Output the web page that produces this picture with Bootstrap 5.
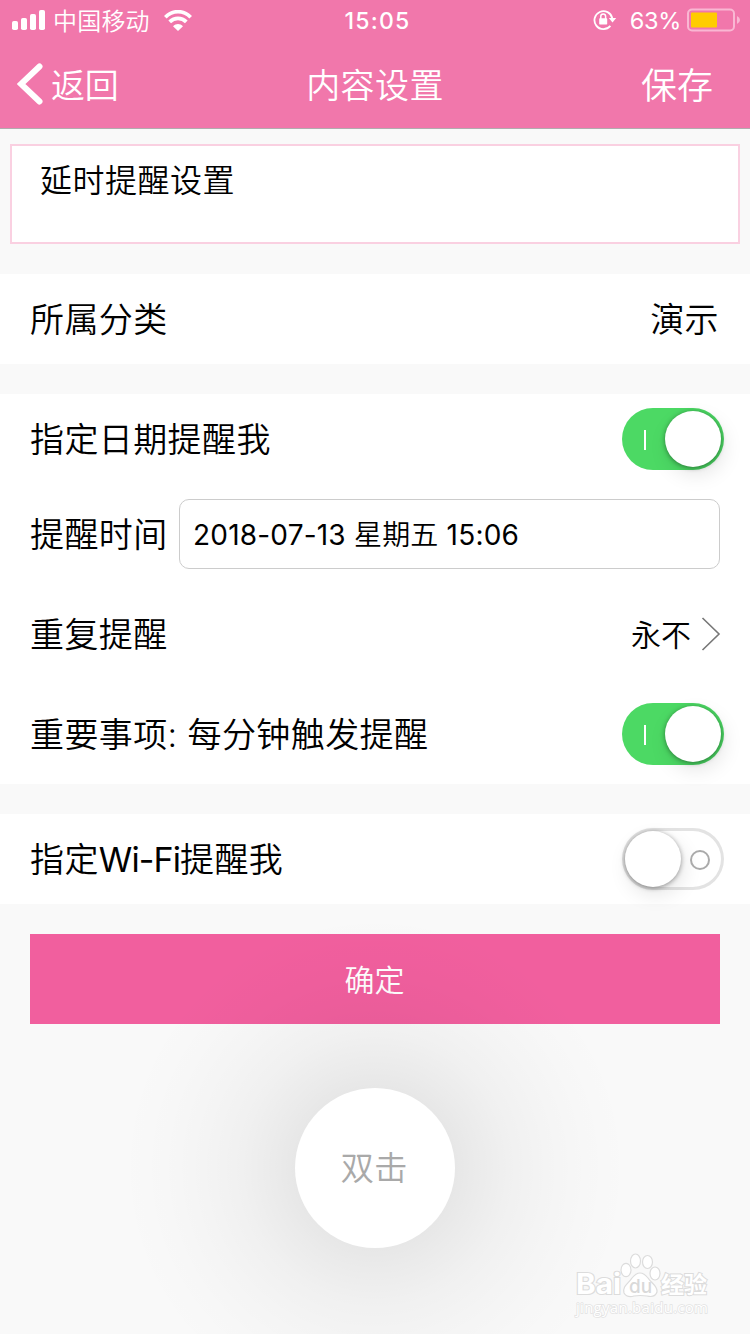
<!DOCTYPE html>
<html lang="zh-CN">
<head>
<meta charset="utf-8">
<meta name="viewport" content="width=device-width, initial-scale=1">
<title>内容设置</title>
<link href="https://cdn.jsdelivr.net/npm/bootstrap@5.3.0/dist/css/bootstrap.min.css" rel="stylesheet">
<style>
  body { width: 750px; height: 1334px; overflow: hidden; background: #f9f9f9; color: #000;
    font-family: Inter, "Noto Sans CJK SC", sans-serif; font-weight: 350; font-size: 34px; line-height: 1; letter-spacing: .4px; }
  main { height: 1205px; overflow: hidden; }
  .top-bar { height: 129px; background: #f177ab; border-bottom: 1px solid #b2abae; }
  .status { height: 40px; }
  .status svg, .titles svg { display: block; flex: none; }
  .carrier { font-size: 24px; letter-spacing: .2px; margin-left: 7px; padding-top: 3px; }
  .wifi { margin-left: 14px; }
  .clock { font-size: 23px; font-weight: 500; letter-spacing: 1.2px; padding: 2px 0 0 1px; }
  .pct { font-size: 23.5px; letter-spacing: -.3px; font-weight: 400; margin-left: 14px; padding-top: 2px; }
  .bat { margin-left: 6px; margin-right: 1px; }
  .lock { margin-right: -1px; }
  .titles { height: 88px; }
  .titles span { padding-top: 3px; }
  .back, .save { width: 260px; }
  .side { flex: 1 1 0; }
  .back { padding-left: 17px; }
  .back-text { margin-left: 8px; letter-spacing: -.2px; }
  .save { font-size: 36px; padding: 3px 37px 0 0; letter-spacing: 0; }
  .memo { height: 100px; margin: 15px 10px 30px; border: 2px solid #fad0e1; padding: 19px 28px; font-size: 32px; letter-spacing: .5px; line-height: 32px; }
  .line { height: 100px; padding: 0 30px; }
  .line-s { height: 90px; }
  .line .lbl { padding-top: 1px; }
  .end { margin-right: 1px; }
  .wf { letter-spacing: -.9px; font-weight: 380; }
  .gap-block { margin-bottom: 30px; }
  .when { height: 70px; width: 541px; border: 1px solid #ccc; border-radius: 10px; font-size: 28px; letter-spacing: .2px; font-weight: 400; padding: 1px 0 0 13px; }
  .when .zh { font-weight: 350; }
  .never { font-size: 30px; letter-spacing: 0; margin-right: -1px; }
  .chev { margin-left: 9px; }
  .sw { width: 102px; height: 62px; border-radius: 31px; margin-right: -4px; padding: 3px; background: #4cd964; }
  .knob { width: 56px; height: 56px; border-radius: 50%; background: #fff; box-shadow: 0 1px 5px rgba(0,0,0,.4), 3px 8px 20px rgba(0,0,0,.1); }
  .sw.on { padding-left: 22px; }
  .bar-on { width: 2px; height: 20px; background: #fff; margin-top: 2px; }
  .sw.off { background: #fff; box-shadow: inset 0 0 0 3px #e3e3e3; padding-right: 14px; }
  .ring { width: 20px; height: 20px; border: 2px solid #aaa; border-radius: 50%; margin-top: 2px; }
  .ok { height: 90px; margin: 0 30px; padding: 1px 1px 0 0; background: #f15f9e; color: #fff; font-size: 30px; letter-spacing: 0; }
  .tap-zone { margin-top: 64px; height: 160px; }
  .tap { width: 160px; height: 160px; border-radius: 50%; background: #fff; color: #a9a9a9; font-size: 33.5px; letter-spacing: .1px; padding: 2px 2px 0 0; }
  .halo { width: 520px; height: 520px; left: 115px; top: -180px; pointer-events: none;
    background: radial-gradient(circle closest-side, rgba(0,0,0,.074) 30%, rgba(0,0,0,.06) 38%, rgba(0,0,0,.037) 52%, rgba(0,0,0,.018) 67%, rgba(0,0,0,.007) 82%, rgba(0,0,0,0) 98%); }
  .mark-baidu { right: 36px; bottom: 12px; }
</style>
</head>
<body>
<header class="top-bar text-white">
  <div class="status d-flex align-items-center px-2">
    <div class="side d-flex align-items-center ps-1">
      <svg width="34" height="20" fill="#fff"><rect x="0" y="11" width="6" height="9" rx="1.8"/><rect x="9" y="8" width="6" height="12" rx="1.8"/><rect x="18" y="4" width="6" height="16" rx="1.8"/><rect x="27" y="0" width="6" height="20" rx="1.8"/></svg>
      <span class="carrier">中国移动</span>
      <svg class="wifi" width="28" height="21" viewBox="0 0 28 21" fill="none" stroke="#fff" stroke-width="3.7"><path d="M1.3 7.2C8.5-.2 19.5-.2 26.7 7.2"/><path d="M5.7 11.9C10.4 7.1 17.6 7.1 22.3 11.9"/><path d="M9 16.3C12 13.2 16 13.2 19 16.3L14 21Z" fill="#fff" stroke="none"/></svg>
    </div>
    <span class="clock">15:05</span>
    <div class="side d-flex align-items-center justify-content-end">
      <svg class="lock" width="24" height="22" viewBox="0 0 24 22"><path d="M17.4 16.9A9 9 0 1 1 19.3 9.4" fill="none" stroke="#fff" stroke-width="1.8"/><path d="M15.8 9H23.2L19.5 13.6Z" fill="#fff"/><rect x="6.2" y="9.2" width="8" height="6.3" rx=".7" fill="#fff"/><path d="M7.8 10V7.3a2.4 2.4 0 0 1 4.8 0V10" fill="none" stroke="#fff" stroke-width="1.5"/></svg>
      <span class="pct">63%</span>
      <svg class="bat" width="54" height="24" viewBox="0 0 54 24"><rect x="1" y="1.5" width="46" height="21" rx="4" fill="none" stroke="#f9b7d3" stroke-width="2"/><rect x="4" y="4.5" width="26" height="15" rx="1" fill="#fc0"/><path d="M50 8Q53 9.5 53 12T50 16Z" fill="#f9b7d3"/></svg>
    </div>
  </div>
  <div class="titles d-flex align-items-center justify-content-between">
    <div class="d-flex align-items-center back">
      <svg width="26" height="42" viewBox="0 0 26 42"><path d="M22.5 3.5 4 21 22.5 38.5" fill="none" stroke="#fff" stroke-width="6" stroke-linecap="round"/></svg>
      <span class="back-text">返回</span>
    </div>
    <span>内容设置</span>
    <div class="text-end save">保存</div>
  </div>
</header>
<main class="position-relative">
  <div class="d-flex"><div class="memo bg-white flex-grow-1">延时提醒设置</div></div>
  <section class="bg-white gap-block">
    <div class="line line-s d-flex align-items-center justify-content-between"><span class="lbl">所属分类</span><span class="lbl end">演示</span></div>
  </section>
  <section class="bg-white gap-block">
    <div class="line line-s d-flex align-items-center justify-content-between"><span class="lbl">指定日期提醒我</span>
      <span class="sw on d-flex align-items-center justify-content-between"><i class="bar-on"></i><i class="knob"></i></span></div>
    <div class="line d-flex align-items-center justify-content-between"><span class="lbl">提醒时间</span>
      <div class="when d-flex align-items-center"><span>2018-07-13 <span class="zh">星期五</span> 15:06</span></div></div>
    <div class="line d-flex align-items-center justify-content-between"><span class="lbl">重复提醒</span>
      <span class="d-flex align-items-center never"><span class="lbl">永不</span>
        <svg class="chev" width="21" height="36" viewBox="0 0 21 36"><path d="M2.5 2 19 18 2.5 34" fill="none" stroke="#777" stroke-width="1.6"/></svg></span></div>
    <div class="line d-flex align-items-center justify-content-between"><span class="lbl">重要事项: 每分钟触发提醒</span>
      <span class="sw on d-flex align-items-center justify-content-between"><i class="bar-on"></i><i class="knob"></i></span></div>
  </section>
  <section class="bg-white gap-block">
    <div class="line line-s d-flex align-items-center justify-content-between"><span class="lbl">指定<span class="wf">Wi-Fi</span>提醒我</span>
      <span class="sw off d-flex align-items-center justify-content-between"><i class="knob"></i><i class="ring"></i></span></div>
  </section>
  <div class="ok d-flex align-items-center justify-content-center">确定</div>
  <div class="tap-zone position-relative d-flex justify-content-center">
    <div class="halo position-absolute"></div>
    <div class="tap position-relative d-flex align-items-center justify-content-center">双击</div>
  </div>
</main>
<svg class="mark-baidu position-absolute" width="140" height="70" viewBox="0 0 140 70" fill="#fff" stroke="#dcdcdc" stroke-width="1.2">
  <text x="2" y="42" font-family="Inter, sans-serif" font-weight="700" font-size="28" letter-spacing="0" textLength="45" lengthAdjust="spacingAndGlyphs" paint-order="stroke" stroke-width="2.2">Bai</text>
  <ellipse cx="52" cy="18" rx="5" ry="6.7"/><ellipse cx="61.5" cy="9" rx="5" ry="7"/><ellipse cx="73.5" cy="10" rx="5" ry="6.5"/><ellipse cx="81" cy="21.5" rx="5" ry="6.5"/>
  <path d="M50 41C48 34 55 31 58 26Q66 16 74 26C77 31 84 34 83 40Q81 46 73 44Q66 43 60 44Q53 46 50 41Z"/>
  <text x="55" y="41" font-family="Inter, sans-serif" font-size="19" font-weight="500" fill="#d9d9d9" stroke="none" letter-spacing="0">du</text>
  <text x="87" y="41" font-family="Noto Sans CJK SC, sans-serif" font-weight="700" font-size="23" letter-spacing="0" stroke-width="2" paint-order="stroke">经验</text>
  <text x="2" y="60.5" font-family="Open Sans, sans-serif" font-weight="400" font-size="15" letter-spacing="0" textLength="132" stroke="#e2e2e2" stroke-width="1.5" paint-order="stroke">jingyan.baidu.com</text>
</svg>
<script src="https://cdn.jsdelivr.net/npm/bootstrap@5.3.0/dist/js/bootstrap.bundle.min.js"></script>
</body>
</html>
